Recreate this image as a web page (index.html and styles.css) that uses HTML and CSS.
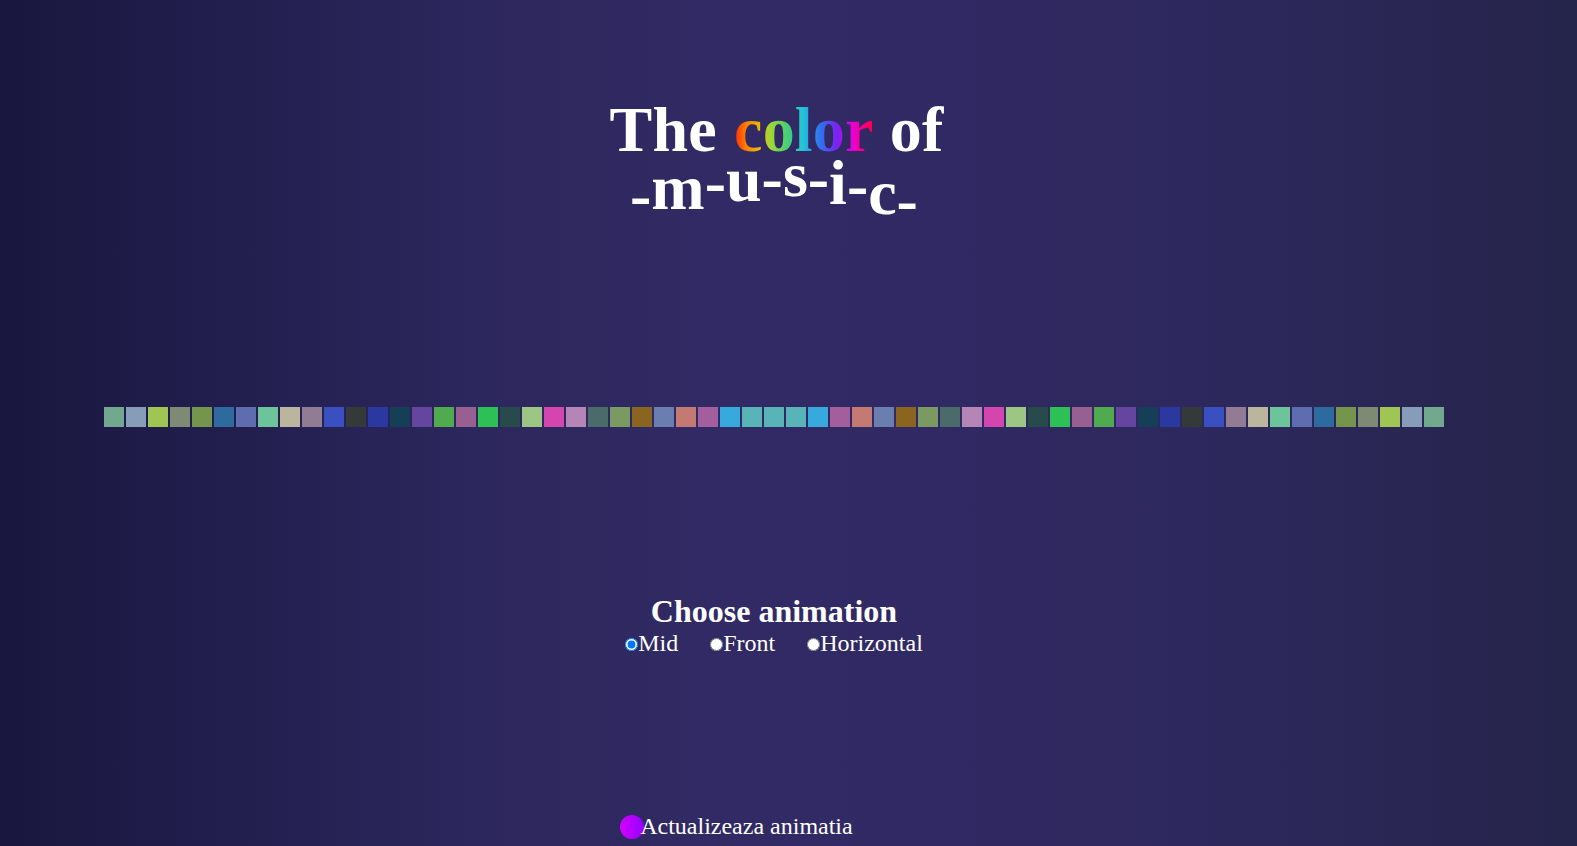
FILE: index.html
```html
<!DOCTYPE html>
<html lang="ro">
<head>
<meta charset="utf-8">
<title>The color of music</title>
<link rel="stylesheet" href="styles.css">
</head>
<body>
<main class="page">
  <h1 class="title">
    <span class="line1">The <span class="rainbow">color</span> of</span>
    <span class="music"><span class="ch c1">-</span><span class="ch c2">m</span><span class="ch c3">-</span><span class="ch c4">u</span><span class="ch c5">-</span><span class="ch c6">s</span><span class="ch c7">-</span><span class="ch c8">i</span><span class="ch c9">-</span><span class="ch c10">c</span><span class="ch c11">-</span></span>
  </h1>

  <div class="bars">
    <div class="sq" style="background:#72a88e"></div>
    <div class="sq" style="background:#879cb8"></div>
    <div class="sq" style="background:#9fc552"></div>
    <div class="sq" style="background:#7e8a74"></div>
    <div class="sq" style="background:#74954b"></div>
    <div class="sq" style="background:#2d6a9e"></div>
    <div class="sq" style="background:#5e6db0"></div>
    <div class="sq" style="background:#6dc49a"></div>
    <div class="sq" style="background:#bcb59e"></div>
    <div class="sq" style="background:#917c93"></div>
    <div class="sq" style="background:#3b50c0"></div>
    <div class="sq" style="background:#343a3a"></div>
    <div class="sq" style="background:#2b38a0"></div>
    <div class="sq" style="background:#143f57"></div>
    <div class="sq" style="background:#6445a0"></div>
    <div class="sq" style="background:#50aa4e"></div>
    <div class="sq" style="background:#985f91"></div>
    <div class="sq" style="background:#2dc055"></div>
    <div class="sq" style="background:#274b4b"></div>
    <div class="sq" style="background:#9dc583"></div>
    <div class="sq" style="background:#d445b0"></div>
    <div class="sq" style="background:#b585b8"></div>
    <div class="sq" style="background:#4b6a6a"></div>
    <div class="sq" style="background:#7a9a62"></div>
    <div class="sq" style="background:#8b6520"></div>
    <div class="sq" style="background:#6a7eb0"></div>
    <div class="sq" style="background:#c47a72"></div>
    <div class="sq" style="background:#a35e9e"></div>
    <div class="sq" style="background:#36aadc"></div>
    <div class="sq" style="background:#58b4b6"></div>
    <div class="sq" style="background:#58b4b6"></div>
    <div class="sq" style="background:#58b4b6"></div>
    <div class="sq" style="background:#36aadc"></div>
    <div class="sq" style="background:#a35e9e"></div>
    <div class="sq" style="background:#c47a72"></div>
    <div class="sq" style="background:#6a7eb0"></div>
    <div class="sq" style="background:#8b6520"></div>
    <div class="sq" style="background:#7a9a62"></div>
    <div class="sq" style="background:#4b6a6a"></div>
    <div class="sq" style="background:#b585b8"></div>
    <div class="sq" style="background:#d445b0"></div>
    <div class="sq" style="background:#9dc583"></div>
    <div class="sq" style="background:#274b4b"></div>
    <div class="sq" style="background:#2dc055"></div>
    <div class="sq" style="background:#985f91"></div>
    <div class="sq" style="background:#50aa4e"></div>
    <div class="sq" style="background:#6445a0"></div>
    <div class="sq" style="background:#143f57"></div>
    <div class="sq" style="background:#2b38a0"></div>
    <div class="sq" style="background:#343a3a"></div>
    <div class="sq" style="background:#3b50c0"></div>
    <div class="sq" style="background:#917c93"></div>
    <div class="sq" style="background:#bcb59e"></div>
    <div class="sq" style="background:#6dc49a"></div>
    <div class="sq" style="background:#5e6db0"></div>
    <div class="sq" style="background:#2d6a9e"></div>
    <div class="sq" style="background:#74954b"></div>
    <div class="sq" style="background:#7e8a74"></div>
    <div class="sq" style="background:#9fc552"></div>
    <div class="sq" style="background:#879cb8"></div>
    <div class="sq" style="background:#72a88e"></div>
  </div>

  <form class="panel">
    <h2 class="panel-title">Choose animation</h2>
    <div class="options">
      <label class="opt opt-mid"><input type="radio" name="anim" value="mid" checked>Mid</label>
      <label class="opt opt-front"><input type="radio" name="anim" value="front">Front</label>
      <label class="opt"><input type="radio" name="anim" value="horizontal">Horizontal</label>
    </div>
    <button type="button" class="update"><span class="dot"></span>Actualizeaza animatia</button>
  </form>
</main>
</body>
</html>
```

FILE: styles.css
```css
html, body {
  margin: 0;
  padding: 0;
  height: 100%;
  overflow: hidden;
}

body {
  background: linear-gradient(90deg, #19163e 0%, #221f4f 15%, #2c275c 30%, #312a64 45%, #302963 60%, #2c285b 80%, #25244a 100%);
  color: #fff;
  font-family: "Liberation Serif", "Times New Roman", serif;
}

.page {
  display: flex;
  flex-direction: column;
  align-items: center;
  padding-right: 29px;
  text-align: center;
}

.title {
  margin: 98px 0 0;
  font-size: 64px;
  font-weight: bold;
  line-height: 64px;
}

.line1, .music {
  display: block;
}

.line1 {
  word-spacing: 1px;
  letter-spacing: 0.2px;
  padding-left: 5px;
}

.music {
  padding-top: 2px;
}

.rainbow {
  background: linear-gradient(90deg, #ff2a00 0%, #ff8a00 10%, #e8c000 19%, #9ad83a 27%, #48d070 38%, #22c2dc 50%, #2f72f0 62%, #7a22f2 74%, #e800d8 85%, #ff0040 100%);
  -webkit-background-clip: text;
  background-clip: text;
  color: transparent;
}

.ch { display: inline-block; }
.c1 { transform: translateY(-1px); }
.c2 { transform: translateY(-8px); }
.c3 { transform: translateY(-14px); }
.c4 { transform: translateY(-16px); }
.c5 { transform: translateY(-18px); }
.c6 { transform: translateY(-21px); }
.c7 { transform: translateY(-18px); }
.c8 { transform: translateY(-13px); }
.c9 { transform: translateY(-11px); }
.c10 { transform: translateY(-3px); }
.c11 { transform: translateY(4px); }

.bars {
  display: flex;
  gap: 2px;
  margin-top: 179px;
}

.sq {
  width: 20px;
  height: 20px;
}

.panel {
  display: flex;
  flex-direction: column;
  align-items: flex-start;
  margin: 166px 5px 0 0;
}

.panel-title {
  align-self: center;
  margin: 0 0 0 5px;
  font-size: 32px;
  line-height: 36px;
  font-weight: bold;
}

.options {
  display: flex;
  align-items: baseline;
  font-size: 24px;
  line-height: 27px;
  padding-top: 1px;
}

.opt {
  display: inline-flex;
  align-items: baseline;
}

.opt input {
  margin: 0 0 0 5px;
  width: 13px;
  height: 13px;
}

.opt-mid { margin-right: 27px; }
.opt-front { margin-right: 27px; }

.update {
  margin-top: 156px;
  padding: 0;
  border: 0;
  background: none;
  color: #fff;
  font-family: "Liberation Serif", "Times New Roman", serif;
  font-size: 24px;
  line-height: 27px;
  display: flex;
  align-items: center;
  cursor: pointer;
}

.dot {
  width: 24px;
  height: 24px;
  border-radius: 50%;
  background: linear-gradient(90deg, #d400ff, #9400ff);
  margin-right: -4px;
}
```
